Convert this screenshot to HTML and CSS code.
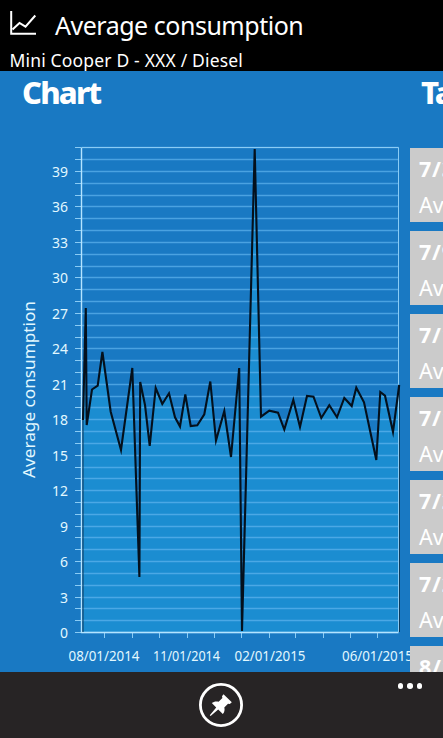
FILE: index.html
```html
<!DOCTYPE html>
<html lang="en">

<head>
    <meta charset="UTF-8" />
    <title>Average consumption</title>
    <link rel="stylesheet" href="styles.css">
</head>

<body>
    <div class="header">
        <div class="title">
            <svg class="logo" width="28" height="26" viewBox="0 0 28 26">
                <path d="M1.2 0v22.7H26" />
                <path d="M2.5 18.5L9.5 12l6 3.7L25.3 4.5" />
            </svg>
            <h1>Average consumption</h1>
        </div>
        <p class="car">Mini Cooper D - XXX / Diesel</p>
    </div>
    <div class="panorama">
        <div class="section chart">
            <h2>Chart</h2>
            <svg class="plot" id="plot" width="416" height="552" viewBox="0 120 416 552"></svg>
        </div>
        <div class="section table">
            <h2>Table</h2>
            <div class="card"><b>7/30/2015</b><span>Average</span></div>
            <div class="card"><b>7/9/2015</b><span>Average</span></div>
            <div class="card"><b>7/19/2015</b><span>Average</span></div>
            <div class="card"><b>7/19/2015</b><span>Average</span></div>
            <div class="card"><b>7/24/2015</b><span>Average</span></div>
            <div class="card"><b>7/29/2015</b><span>Average</span></div>
            <div class="card"><b>8/1/2015</b><span>Average</span></div>
        </div>
    </div>
    <div class="appbar">
        <svg class="pin" width="46" height="46" viewBox="0 0 46 46">
            <circle cx="23" cy="23" r="20.6" />
            <path d="M25.5 12.2L33.8 20.3L31.8 22L30 21.7L26.3 25.5C27 28 26.4 30.4 24.8 32L20.2 27.4L12.6 34L11.8 33.2L18.2 25.4L13.8 21C15.6 19.5 18.2 19 20.6 19.7L24.4 16.1L24 14.2Z" />
        </svg>
        <div class="more"><i></i><i></i><i></i></div>
    </div>
    <script>
        const plot = document.getElementById('plot')
        const left = 81.5, right = 398.5, bottom = 632, step = 11.82
        // points of the consumption line
        const points = [
            [83, 420], [85.8, 308], [86.7, 425], [92, 389.5], [97.7, 385.7], [102.4, 352], [110.7, 411.7],
            [121, 450], [132.3, 368], [139.4, 577], [140.2, 382], [145, 405], [149.7, 446], [155.7, 388],
            [162.3, 404], [169, 393.3], [175, 417.3], [180, 426.5], [185.3, 394.5], [190.7, 426],
            [197.3, 425.2], [204.3, 414.3], [210.3, 381.5], [216, 440.5], [224.3, 411], [231, 457],
            [239.2, 368], [242, 631], [254.7, 149], [261, 416.7], [269.3, 410.7], [278, 412.7],
            [284.3, 429.5], [293.3, 400], [300, 427], [307, 396], [313.5, 396.7], [321.3, 418],
            [329.3, 405.3], [337, 417.3], [344.3, 398], [351.7, 406], [356.3, 387.7], [364, 402.3],
            [376.3, 460], [380.3, 392], [385, 395.7], [393, 432], [399.2, 385]
        ]
        const line = points.map(p => p.join(',')).join(' ')
        let str = `<polygon class="area" points="83,${bottom} ${line} 399.2,${bottom}" />`
        // grid lines and labels
        for (let i = 0; i <= 41; i++) {
            let y = Math.round(bottom - i * step) + 0.5
            str += `<path class="grid" d="M${left} ${y}H${right}" />`
            str += `<path class="tick" d="M75 ${y}H${left}" />`
            if (i % 3 === 0) {
                str += `<text x="68" y="${y + 5}" text-anchor="end" textLength="${i < 10 ? 8 : 16}" lengthAdjust="spacingAndGlyphs">${i}</text>`
            }
        }
        let ticks = [104.5, 132.5, 159.5, 187.5, 214.5, 241.5, 269.5, 295.5, 323.5, 350.5, 377.5]
        ticks.forEach(x => {
            str += `<path class="tick" d="M${x} 632V638" />`
        })
        let dates = [[68.5, '08/01/2014'], [153, '11/01/2014'], [234.5, '02/01/2015'], [342, '06/01/2015']]
        dates.forEach(d => {
            str += `<text x="${d[0]}" y="661" textLength="${d[1] === '11/01/2014' ? 67 : 71}" lengthAdjust="spacingAndGlyphs">${d[1]}</text>`
        })
        str += `<path class="axis" d="M${left} 148V632.5H${right}" />`
        str += `<path class="frame" d="M${left} 147.5H${right}V632" />`
        str += `<path class="edge" d="M83 ${bottom}V420M399.5 ${bottom}V385" />`
        str += `<polyline class="line" points="${line}" />`
        str += `<text class="name" transform="translate(35 478) rotate(-90)" textLength="177" lengthAdjust="spacingAndGlyphs">Average consumption</text>`
        plot.innerHTML = str
    </script>
</body>

</html>
```
FILE: styles.css
```css
body {
    display: flex;
    flex-direction: column;
    height: 738px;
    margin: 0;
    overflow: hidden;
    background-color: #1979c3;
    color: #fff;
    font-family: "Noto Sans", "Open Sans", sans-serif;
}

h1,
h2,
p {
    margin: 0;
    font-weight: normal;
    white-space: nowrap;
}

.header {
    flex: none;
    height: 71px;
    background-color: #000;
}

.title {
    display: flex;
    height: 47px;
    padding: 0 10px;
    gap: 17px;
}

.logo {
    margin-top: 11px;
    fill: none;
    stroke: #fff;
    stroke-width: 2;
}

.title h1 {
    font-size: 25px;
    line-height: 50px;
    letter-spacing: -0.48px;
}

.car {
    padding-left: 9.5px;
    font-size: 17.5px;
    line-height: 26px;
    letter-spacing: 0.17px;
}

.panorama {
    display: flex;
    flex: none;
    height: 601px;
    overflow: hidden;
}

.section {
    flex: none;
}

.section h2 {
    flex: none;
    height: 49px;
    font-size: 31px;
    font-weight: 800;
    line-height: 43px;
    letter-spacing: -1.8px;
}

.chart {
    width: 409px;
}

.chart h2 {
    padding-left: 22px;
}

.plot {
    display: block;
}

.table {
    display: flex;
    flex-direction: column;
    gap: 9px;
    width: 340px;
    margin-left: 1px;
    position: relative;
}

.table h2 {
    height: 68px;
    padding-left: 11px;
}

.card {
    display: flex;
    flex: none;
    flex-direction: column;
    height: 74px;
    padding-left: 9px;
    box-sizing: border-box;
    background-color: #cbcbcb;
    font-size: 21.5px;
}

.card b {
    padding-top: 4px;
    line-height: 33px;
    letter-spacing: 0.8px;
}

.card span {
    line-height: 39px;
}

.appbar {
    display: grid;
    grid-template-columns: 1fr 46px 1fr;
    flex: 1;
    background-color: #272425;
}

.pin {
    grid-column: 2;
    margin-top: 10px;
    margin-left: -1px;
}

.pin circle {
    fill: none;
    stroke: #fff;
    stroke-width: 2.8;
}

.pin path {
    fill: #fff;
}

.more {
    display: flex;
    justify-content: flex-end;
    gap: 4px;
    padding: 11px 21px 0 0;
}

.more i {
    width: 5.5px;
    height: 5.5px;
    border-radius: 50%;
    background-color: #fff;
}

.plot text {
    fill: #e2f8ff;
    font-size: 14px;
}

.plot .name {
    font-size: 16.5px;
}

.area {
    fill: #1b8dd1;
}

.grid,
.tick,
.frame,
.axis,
.edge,
.line {
    fill: none;
}

.grid {
    stroke: #5fb4ee;
    stroke-opacity: 0.7;
    stroke-width: 1.3;
}

.tick,
.frame {
    stroke: #8accf5;
}

.axis {
    stroke: #b4e4ff;
    stroke-width: 1.4;
}

.edge {
    stroke: #0b3a5c;
}

.line {
    stroke: #04101c;
    stroke-width: 2.1;
    stroke-miterlimit: 6;
}
```
